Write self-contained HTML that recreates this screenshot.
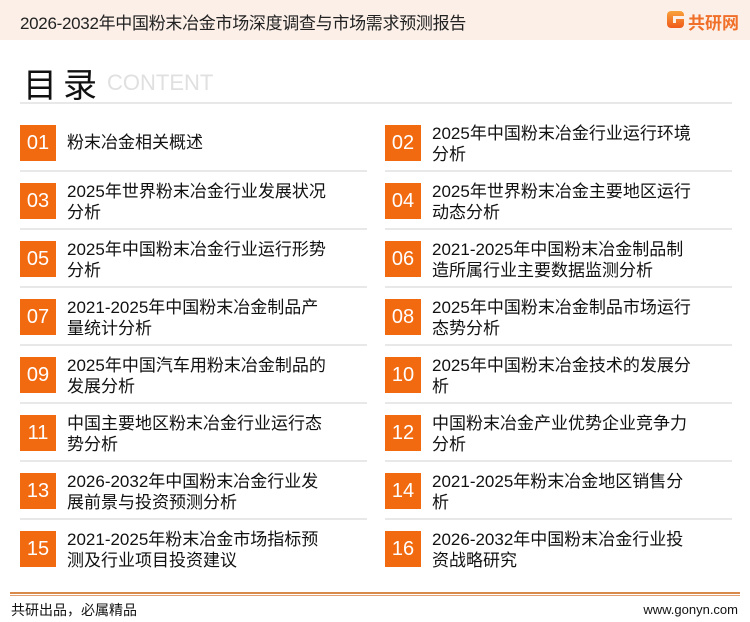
<!DOCTYPE html>
<html><head><meta charset="utf-8"><style>
*{margin:0;padding:0;box-sizing:border-box}
body{width:750px;height:622px;background:#fff;position:relative;overflow:hidden;font-family:"Liberation Sans","Noto Sans CJK SC",sans-serif;color:#111}
.hd{position:absolute;left:0;top:0;width:750px;height:40px;background:#fbefe8}
.ht{position:absolute;left:20px;top:9px;font-size:17px;color:#222;letter-spacing:-0.3px}
.logo{position:absolute;left:667px;top:11px;width:17px;height:17px;border-radius:4px;background:linear-gradient(#f9a23a,#ef5a1c)}
.logo:after{content:"";position:absolute;left:6px;top:5px;width:11px;height:3px;background:#fbefe8}
.logo:before{content:"";position:absolute;left:6px;top:8px;width:3px;height:4px;background:#fbefe8}
.lt{position:absolute;left:688px;top:9px;font-size:17px;font-weight:bold;color:#f0702a}
.ml{position:absolute;left:23px;top:58px;font-size:34px;letter-spacing:6px;color:#111}
.ct{position:absolute;left:107px;top:70px;font-size:22px;color:#e0e0e0}
.dv{position:absolute;left:20px;top:102px;width:712px;height:2px;background:#e8e8e8}
.it{position:absolute;width:347px;height:58px}
.bx{position:absolute;left:0;top:0;width:36px;height:36px;background:#f26a10;color:#fff;font-size:20px;text-align:center;line-height:36px}
.tx{position:absolute;left:47px;top:-2px;font-size:17px;line-height:21px;white-space:nowrap}
.ln{position:absolute;left:0;top:45px;width:347px;height:2px;background:#e8e8e8}
.b1{position:absolute;left:10px;top:592px;width:730px;height:2px;background:#d98a4a}
.b2{position:absolute;left:10px;top:595px;width:730px;height:1px;background:#e2a070}
.ft{position:absolute;left:11px;top:600px;font-size:14px}
.fr{position:absolute;right:12px;top:602px;font-size:13px}
</style></head><body>
<div class="hd"></div>
<div class="ht">2026-2032年中国粉末冶金市场深度调查与市场需求预测报告</div>
<div class="logo"></div><div class="lt">共研网</div>
<div class="ml">目录</div><div class="ct">CONTENT</div>
<div class="dv"></div>

<div class="it" style="left:20px;top:125px"><div class="bx">01</div><div class="tx" style="top:7px">粉末冶金相关概述</div><div class="ln"></div></div>
<div class="it" style="left:385px;top:125px"><div class="bx">02</div><div class="tx">2025年中国粉末冶金行业运行环境<br>分析</div><div class="ln"></div></div>
<div class="it" style="left:20px;top:183px"><div class="bx">03</div><div class="tx">2025年世界粉末冶金行业发展状况<br>分析</div><div class="ln"></div></div>
<div class="it" style="left:385px;top:183px"><div class="bx">04</div><div class="tx">2025年世界粉末冶金主要地区运行<br>动态分析</div><div class="ln"></div></div>
<div class="it" style="left:20px;top:241px"><div class="bx">05</div><div class="tx">2025年中国粉末冶金行业运行形势<br>分析</div><div class="ln"></div></div>
<div class="it" style="left:385px;top:241px"><div class="bx">06</div><div class="tx">2021-2025年中国粉末冶金制品制<br>造所属行业主要数据监测分析</div><div class="ln"></div></div>
<div class="it" style="left:20px;top:299px"><div class="bx">07</div><div class="tx">2021-2025年中国粉末冶金制品产<br>量统计分析</div><div class="ln"></div></div>
<div class="it" style="left:385px;top:299px"><div class="bx">08</div><div class="tx">2025年中国粉末冶金制品市场运行<br>态势分析</div><div class="ln"></div></div>
<div class="it" style="left:20px;top:357px"><div class="bx">09</div><div class="tx">2025年中国汽车用粉末冶金制品的<br>发展分析</div><div class="ln"></div></div>
<div class="it" style="left:385px;top:357px"><div class="bx">10</div><div class="tx">2025年中国粉末冶金技术的发展分<br>析</div><div class="ln"></div></div>
<div class="it" style="left:20px;top:415px"><div class="bx">11</div><div class="tx">中国主要地区粉末冶金行业运行态<br>势分析</div><div class="ln"></div></div>
<div class="it" style="left:385px;top:415px"><div class="bx">12</div><div class="tx">中国粉末冶金产业优势企业竞争力<br>分析</div><div class="ln"></div></div>
<div class="it" style="left:20px;top:473px"><div class="bx">13</div><div class="tx">2026-2032年中国粉末冶金行业发<br>展前景与投资预测分析</div><div class="ln"></div></div>
<div class="it" style="left:385px;top:473px"><div class="bx">14</div><div class="tx">2021-2025年粉末冶金地区销售分<br>析</div><div class="ln"></div></div>
<div class="it" style="left:20px;top:531px"><div class="bx">15</div><div class="tx">2021-2025年粉末冶金市场指标预<br>测及行业项目投资建议</div></div>
<div class="it" style="left:385px;top:531px"><div class="bx">16</div><div class="tx">2026-2032年中国粉末冶金行业投<br>资战略研究</div></div>

<div class="b1"></div><div class="b2"></div>
<div class="ft">共研出品，必属精品</div>
<div class="fr">www.gonyn.com</div>
</body></html>
